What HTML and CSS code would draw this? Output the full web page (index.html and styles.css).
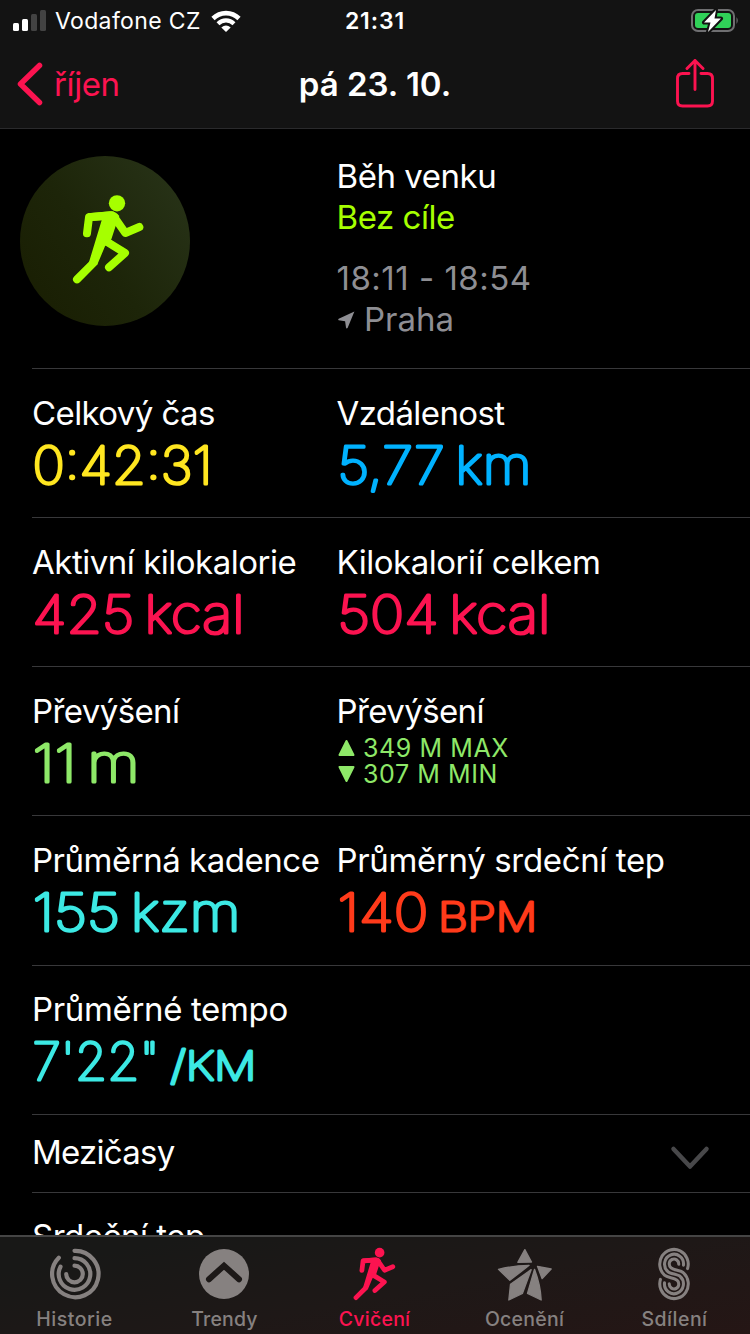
FILE: index.html
```html
<!DOCTYPE html>
<html lang="cs">
<head>
<meta charset="utf-8">
<title>pá 23. 10.</title>
<link rel="stylesheet" href="styles.css">
</head>
<body>
<svg class="defs" width="0" height="0" aria-hidden="true">
  <symbol id="runner" viewBox="180 140 230 284">
    <circle cx="321" cy="174" r="24.5" fill="currentColor"/>
    <path d="M233 204 300 198Q318 198 328 212L316 245 304 282 285 303 261 360 237 350 275 225 245 227Z" fill="currentColor"/>
    <path d="M305 210 237 215.500 231 264M312 214 346 263 388 245M290 289 345 323 297 366M250 353 201 402" fill="none" stroke="currentColor" stroke-width="24" stroke-linecap="round" stroke-linejoin="round"/>
  </symbol>
</svg>
<div class="screen">
  <header class="top">
    <div class="status">
      <div class="carrier">
        <svg width="34" height="22" viewBox="0 0 34 22"><g fill="#fff"><rect y="13" width="6" height="8" rx="1.500"/><rect x="9" y="9" width="6" height="12" rx="1.500"/></g><g fill="#434343"><rect x="18" y="4" width="6" height="17" rx="1.500"/><rect x="27" y="0" width="6" height="21" rx="1.500"/></g></svg>
        <span class="carrier-name">Vodafone CZ</span>
        <svg class="wifi" width="30" height="22" viewBox="0 0 30 22"><path d="M2 8.500A18.500 18.500 0 0 1 28 8.500" fill="none" stroke="#fff" stroke-width="4.600"/><path d="M7 13.700A11.500 11.500 0 0 1 23 13.700" fill="none" stroke="#fff" stroke-width="4.200"/><path d="M15 22 10.300 17.500Q15 13.600 19.700 17.500Z" fill="#fff"/></svg>
      </div>
      <span class="clock">21:31</span>
      <svg class="battery" width="50" height="26" viewBox="0 0 50 26"><rect x="3" y="2" width="42" height="21" rx="6" fill="none" stroke="#6f6f71" stroke-width="2"/><rect x="6" y="5" width="36" height="15" rx="3" fill="#30d158"/><path d="M47.500 9Q50 12.500 47.500 16Z" fill="#6f6f71"/><path d="M27 2 15 14.500H21.500L19 24 32 10.500H25.500Z" fill="#fff" stroke="#121212" stroke-width="4" stroke-linejoin="round" paint-order="stroke"/></svg>
    </div>
    <nav class="nav">
      <a class="back"><svg width="28" height="44" viewBox="0 0 28 44"><path d="M23.500 3.500 4.500 22 23.500 40.500" fill="none" stroke="currentColor" stroke-width="5.500" stroke-linecap="round" stroke-linejoin="round"/></svg><span>říjen</span></a>
      <h1 class="title">pá 23. 10.</h1>
      <svg class="share" width="40" height="50" viewBox="0 0 40 50"><path d="M14 14.500H7.500Q2.500 14.500 2.500 19.500V42Q2.500 47 7.500 47H32.500Q37.500 47 37.500 42V19.500Q37.500 14.500 32.500 14.500H26M20 30.500V1.500M12 9.500 20 1.500 28 9.500" fill="none" stroke="currentColor" stroke-width="2.900" stroke-linecap="round"/></svg>
    </nav>
  </header>

  <main class="content">
    <section class="hero">
      <div class="badge"><svg class="badge-runner" width="76.700" height="94.700"><use href="#runner"/></svg></div>
      <div class="summary">
        <p class="line tight">Běh venku</p>
        <p class="line tight goal">Bez cíle</p>
        <p class="line muted time">18:11 - 18:54</p>
        <p class="line muted place"><svg width="18" height="18" viewBox="0 0 18 18"><path d="M17.400 .400 10.600 17Q9.300 18 9 16.500L8.100 10.200 1.600 9.300Q.600 8.500 1.700 7.800Z" fill="currentColor"/></svg><span>Praha</span></p>
      </div>
    </section>

    <section class="row">
      <div class="cell"><p class="label">Celkový čas</p><svg class="value yellow" width="290" height="56"><text x="0.500" y="46.700" textLength="180" lengthAdjust="spacingAndGlyphs">0:42:31</text></svg></div>
      <div class="cell"><p class="label">Vzdálenost</p><svg class="value blue" width="290" height="56"><text x="0.500" y="46.700" textLength="194" lengthAdjust="spacingAndGlyphs">5,77 km</text></svg></div>
    </section>
    <section class="row">
      <div class="cell"><p class="label wide">Aktivní kilokalorie</p><svg class="value pink" width="290" height="56"><text x="0.500" y="46.700" textLength="212" lengthAdjust="spacingAndGlyphs">425 kcal</text></svg></div>
      <div class="cell"><p class="label wide">Kilokalorií celkem</p><svg class="value pink" width="290" height="56"><text x="0.500" y="46.700" textLength="213" lengthAdjust="spacingAndGlyphs">504 kcal</text></svg></div>
    </section>
    <section class="row">
      <div class="cell"><p class="label">Převýšení</p><svg class="value green" width="290" height="56"><text x="0.500" y="46.700" textLength="107" lengthAdjust="spacingAndGlyphs">11 m</text></svg></div>
      <div class="cell"><p class="label">Převýšení</p>
        <div class="extremes">
          <p class="extreme"><svg width="18" height="18" viewBox="0 0 18 18"><path d="M9.500 2 16.500 16H2.500Z" fill="currentColor" stroke="currentColor" stroke-width="2" stroke-linejoin="round"/></svg><span>349 M MAX</span></p>
          <p class="extreme"><svg width="18" height="18" viewBox="0 0 18 18"><path d="M9.500 16 2.500 2H16.500Z" fill="currentColor" stroke="currentColor" stroke-width="2" stroke-linejoin="round"/></svg><span>307 M MIN</span></p>
        </div>
      </div>
    </section>
    <section class="row tall">
      <div class="cell"><p class="label wide">Průměrná kadence</p><svg class="value cyan" width="290" height="56"><text x="0.500" y="46.700" textLength="208" lengthAdjust="spacingAndGlyphs">155 kzm</text></svg></div>
      <div class="cell"><p class="label wider">Průměrný srdeční tep</p><svg class="value red" width="290" height="56"><text x="0.500" y="46.700" textLength="91" lengthAdjust="spacingAndGlyphs">140</text><text class="unit" x="101" y="46.700" textLength="99" lengthAdjust="spacingAndGlyphs">BPM</text></svg></div>
    </section>
    <section class="row short">
      <div class="cell"><p class="label wider">Průměrné tempo</p><svg class="value cyan" width="290" height="56"><text x="0.500" y="46.700" textLength="127" lengthAdjust="spacingAndGlyphs">7'22"</text><text class="unit" x="138.500" y="46.700" textLength="86" lengthAdjust="spacingAndGlyphs">/KM</text></svg></div>
    </section>
    <section class="splits">
      <p class="label narrow">Mezičasy</p>
      <svg width="40" height="26" viewBox="0 0 40 26"><path d="M3.500 4 20 21.500 36.500 4" fill="none" stroke="#48484a" stroke-width="4.500" stroke-linecap="round" stroke-linejoin="round"/></svg>
    </section>
    <section class="heart"><p class="label wide">Srdeční tep</p></section>
  </main>

  <footer class="tabs">
    <a class="tab"><svg width="56" height="56" viewBox="-28.500 -28 56 56"><path d="M0-23.200A23.200 23.200 0 1 1-15.700-16.300M0-15.800A15.800 15.800 0 1 1-14-7.300M0-8.300A8.300 8.300 0 1 1-8.300 0" fill="none" stroke="currentColor" stroke-width="4.200" stroke-linecap="round"/></svg><span class="tab-name">Historie</span></a>
    <a class="tab"><svg width="56" height="56" viewBox="-28 -28 56 56"><circle r="25" fill="currentColor"/><path d="M-15 5.200 0-8.300 15 5.200" fill="none" stroke="#1c1817" stroke-width="6" stroke-linecap="round"/></svg><span class="tab-name trendy">Trendy</span></a>
    <a class="tab active"><svg width="56" height="56" viewBox="-.500 0 56 56"><use href="#runner" width="56" height="56"/></svg><span class="tab-name tighter">Cvičení</span></a>
    <a class="tab"><svg width="56" height="56" viewBox="588.500 108 168 168"><path d="M675 119 695 156 654 157ZM596 178Q640 167 688 166L630 211ZM632 223 694 179 668 250 627 270ZM704 178 683 250 724 270Q722 224 704 178ZM713 169 754 177 727 206Z" fill="currentColor" stroke="currentColor" stroke-width="4" stroke-linejoin="round"/></svg><span class="tab-name tighter">Ocenění</span></a>
    <a class="tab"><svg width="56" height="56" viewBox="-28 -28 56 56"><g fill="none" stroke="currentColor" stroke-width="3.200" stroke-linecap="round" transform="scale(.95 .985)"><path d="M14.300-5.500A15 15 0 1 0-10 1.200C-7 4 0 3.500 3 6.200A5 5 0 1 1-5 10"/><path d="M10-9A10 10 0 1 0-6.500-2.500C-4 0 4 0 6.500 2.500A10 10 0 1 1-10 9"/><path d="M5-10A5 5 0 1 0-3-6.200C0-3.500 7-4 10-1.200A15 15 0 1 1-14.300 5.500"/></g></svg><span class="tab-name">Sdílení</span></a>
  </footer>
</div>
</body>
</html>
```

FILE: styles.css
```css
* { box-sizing: border-box; }
body { margin: 0; background: #000; color: #fff; font-family: "Inter", sans-serif; }
p, h1 { margin: 0; font-weight: 400; white-space: nowrap; }
svg { display: block; flex: none; }
.defs { position: absolute; }

.screen { display: flex; flex-direction: column; width: 750px; height: 1334px; overflow: hidden; }

.top { height: 129px; flex: none; background: #131313; border-bottom: 1px solid #2a2a2c; }
.status, .nav { display: grid; grid-template-columns: 1fr auto 1fr; align-items: center; }
.status { height: 40px; font-size: 23px; line-height: 40px; padding: 0 11px 0 13px; }
.carrier { display: flex; align-items: center; }
.carrier-name { margin-left: 8px; padding-top: 1px; letter-spacing: .35px; }
.wifi { margin-left: 10px; }
.clock { padding-top: 1px; font-weight: 600; letter-spacing: .9px; margin-right: 2px; }
.battery { justify-self: end; }
.nav { height: 88px; padding: 0 16px; color: #fc1350; font-size: 33px; line-height: 88px; }
.back { display: flex; align-items: center; }
.back span { margin-left: 10px; letter-spacing: -.4px; }
.title { font-size: 33px; font-weight: 600; color: #fff; letter-spacing: 0; }
.share { justify-self: end; margin-right: 19px; }

.content { flex: 1; min-height: 0; overflow: hidden; }
.hero { display: flex; height: 239px; padding: 27px 0 0 20px; }
.badge { width: 170px; height: 170px; border-radius: 50%; background: linear-gradient(55deg, #191e02 5%, #1d2509 45%, #273217 90%); color: #a6ff00; padding: 36px 0 0 50px; }
.summary { margin-left: 146.500px; }
.line { font-size: 33px; line-height: 41px; }
.tight { letter-spacing: -.45px; }
.goal { color: #a6ff00; }
.muted { color: #8e8e93; }
.time { margin-top: 20px; letter-spacing: .5px; }
.place { display: flex; align-items: center; gap: 9.500px; }

.row { display: flex; height: 149px; margin-left: 32px; padding-top: 24px; border-top: 1px solid #38383a; }
.tall { height: 150px; }
.short { padding-top: 23px; }
.cell:first-child { width: 304.500px; }
.label { font-size: 33px; line-height: 40px; letter-spacing: -.6px; }
.wide { letter-spacing: -.48px; }
.wider { letter-spacing: -.35px; }
.narrow { letter-spacing: -.75px; }
.value { margin-top: 4px; overflow: visible; font-size: 52px; font-weight: 100; word-spacing: -5px; fill: currentColor; stroke: currentColor; stroke-width: 3.200px; stroke-linejoin: round; stroke-linecap: round; }
.unit { font-size: 40px; }
.yellow { color: #ffe620; }
.blue { color: #00b2ff; }
.pink { color: #fc1350; }
.green { color: #8ee868; }
.cyan { color: #3ce9e4; }
.red { color: #ff3a1a; }
.extremes { margin-top: 4px; color: #8ee868; font-size: 25px; line-height: 26px; letter-spacing: .6px; }
.extreme { display: flex; align-items: center; gap: 8.500px; }

.splits { display: flex; justify-content: space-between; height: 78px; margin-left: 32px; padding: 17px 40px 0 0; border-top: 1px solid #38383a; }
.splits svg { margin-top: 13px; }
.heart { margin-left: 32px; padding-top: 23px; border-top: 1px solid #38383a; }

.tabs { display: flex; width: 752px; height: 99px; flex: none; margin-left: -1px; border-top: 2px solid #454545; background: linear-gradient(170deg, #181817 15%, #1e1817 55%, #251615 100%); color: #868180; }
.tab { width: 150px; display: flex; flex-direction: column; align-items: center; padding-top: 9px; }
.tab-name { font-size: 19.500px; line-height: 28px; margin-top: 3px; font-weight: 500; letter-spacing: .5px; padding-left: 1px; }
.trendy { letter-spacing: .2px; }
.tighter { letter-spacing: .25px; }
.active { color: #fc1350; }
```
